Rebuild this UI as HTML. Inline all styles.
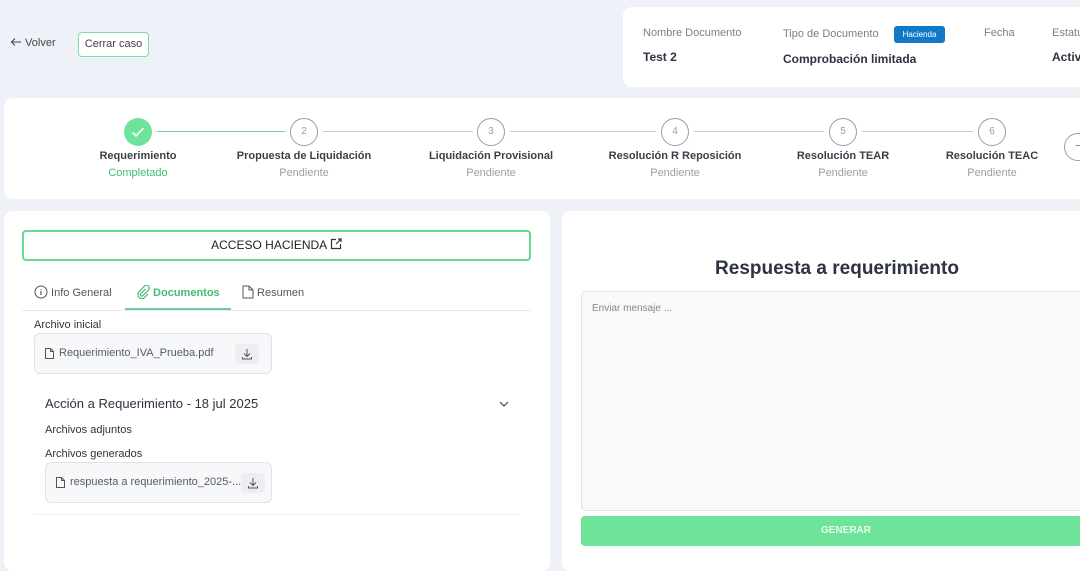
<!DOCTYPE html>
<html><head><meta charset="utf-8"><style>
*{margin:0;padding:0;box-sizing:border-box}
body{width:1080px;height:554px;overflow:hidden;background:#eef1f8;font-family:"Liberation Sans",sans-serif;position:relative;color:#2d3340}
.a{position:absolute}
.card{position:absolute;background:#fff;border-radius:9px}
.lbl{font-size:11px;color:#7a7f88}
.val{font-size:12px;font-weight:bold;color:#2d3340}
.circ{position:absolute;width:28px;height:28px;border-radius:50%;border:1.5px solid #9a9ea6;background:#fff;font-size:10px;color:#9a9ea6;text-align:center;line-height:25px}
.sl{position:absolute;font-size:11px;font-weight:bold;color:#3a3f48;white-space:nowrap;transform:translateX(-50%)}
.ss{position:absolute;font-size:11px;color:#9a9ea6;white-space:nowrap;transform:translateX(-50%)}
.line{position:absolute;height:1px;background:#c8cbd0;top:131px}
.file{position:absolute;border:1px solid #dfe2e7;border-radius:6px;background:#f7f8fa;font-size:11px;color:#555b66}
.dl{position:absolute;width:24px;height:20px;background:#eceef2;border-radius:4px}
</style></head><body>
<div class="a" style="left:10px;top:37px;font-size:11px;color:#444"><svg width="12" height="10" style="vertical-align:-1px"><path d="M11 5H1.5M5 1.5L1.5 5 5 8.5" stroke="#444" stroke-width="1.1" fill="none"/></svg> Volver</div>
<div class="a" style="left:78px;top:32px;width:71px;height:25px;border:1.5px solid #7ddfa0;border-radius:4px;background:#fff;font-size:11px;color:#444;text-align:center;line-height:22px">Cerrar caso</div>

<div class="card" style="left:623px;top:7px;width:470px;height:80px">
<div class="a lbl" style="left:20px;top:20px">Nombre Documento</div>
<div class="a val" style="left:20px;top:43px">Test 2</div>
<div class="a lbl" style="left:160px;top:21px">Tipo de Documento</div>
<div class="a" style="left:271px;top:19px;width:51px;height:17px;background:#1279c6;border-radius:3px;color:#fff;font-size:8px;text-align:center;line-height:17px">Hacienda</div>
<div class="a val" style="left:160px;top:45px">Comprobación limitada</div>
<div class="a lbl" style="left:361px;top:20px">Fecha</div>
<div class="a lbl" style="left:429px;top:20px">Estatus</div>
<div class="a val" style="left:429px;top:43px">Activo</div>
</div>

<div class="card" style="left:4px;top:98px;width:1090px;height:101px"></div>
<div class="line" style="left:157px;width:128px;background:#6fc99a"></div>
<div class="line" style="left:323px;width:150px"></div>
<div class="line" style="left:510px;width:146px"></div>
<div class="line" style="left:694px;width:130px"></div>
<div class="line" style="left:862px;width:111px"></div>
<div class="a" style="left:124px;top:118px;width:28px;height:28px;border-radius:50%;background:#6ee39a"><svg width="28" height="28"><path d="M8.5 14.5l3.5 3.5 7.5-8" stroke="#fff" stroke-width="1.6" fill="none"/></svg></div>
<div class="circ" style="left:290px;top:118px">2</div>
<div class="circ" style="left:477px;top:118px">3</div>
<div class="circ" style="left:661px;top:118px">4</div>
<div class="circ" style="left:829px;top:118px">5</div>
<div class="circ" style="left:978px;top:118px">6</div>
<div class="circ" style="left:1064px;top:133px;color:#666">&#8722;</div>
<div class="sl" style="left:138px;top:150px">Requerimiento</div><div class="ss" style="left:138px;top:167px;color:#3fbf6e">Completado</div>
<div class="sl" style="left:304px;top:150px">Propuesta de Liquidación</div><div class="ss" style="left:304px;top:167px">Pendiente</div>
<div class="sl" style="left:491px;top:150px">Liquidación Provisional</div><div class="ss" style="left:491px;top:167px">Pendiente</div>
<div class="sl" style="left:675px;top:150px">Resolución R Reposición</div><div class="ss" style="left:675px;top:167px">Pendiente</div>
<div class="sl" style="left:843px;top:150px">Resolución TEAR</div><div class="ss" style="left:843px;top:167px">Pendiente</div>
<div class="sl" style="left:992px;top:150px">Resolución TEAC</div><div class="ss" style="left:992px;top:167px">Pendiente</div>

<div class="card" style="left:4px;top:211px;width:546px;height:360px">
<div class="a" style="left:18px;top:19px;width:509px;height:31px;border:2px solid #6bd890;border-radius:4px;text-align:center;line-height:27px;font-size:12px;color:#222">ACCESO HACIENDA <svg width="12" height="12" style="vertical-align:-1px"><path d="M6 1.5H1.5v9h9V6M8 1h3v3M11 1L6 6" stroke="#333" stroke-width="1.2" fill="none"/></svg></div>
<div class="a" style="left:30px;top:74px;font-size:11px;color:#555"><svg width="14" height="14" style="vertical-align:-3px"><circle cx="7" cy="7" r="6" stroke="#555" fill="none"/><path d="M7 6v4M7 4v.8" stroke="#555" stroke-width="1.2"/></svg> Info General</div>
<div class="a" style="left:132px;top:74px;font-size:11px;color:#3fbf6e;font-weight:bold"><svg width="14" height="14" style="vertical-align:-3px"><path d="M9.5 4L4.5 9a1.5 1.5 0 002 2l6-6a2.8 2.8 0 00-4-4L2.5 7.5a4 4 0 005.5 5.5l4-4" stroke="#3fbf6e" stroke-width="1.2" fill="none"/></svg> Documentos</div>
<div class="a" style="left:238px;top:74px;font-size:11px;color:#555"><svg width="12" height="14" style="vertical-align:-3px"><path d="M1 1h6l4 4v8H1zM7 1v4h4" stroke="#555" fill="none"/></svg> Resumen</div>
<div class="a" style="left:18px;top:99px;width:509px;height:1px;background:#e6e8ec"></div>
<div class="a" style="left:121px;top:97px;width:106px;height:2px;background:#6fc99a"></div>
<div class="a" style="left:30px;top:108px;font-size:11px;color:#333">Archivo inicial</div>
<div class="file" style="left:30px;top:122px;width:238px;height:41px"><svg class="a" style="left:10px;top:14px" width="9" height="11"><path d="M.5.5h5l3 3v7H.5zM5.5.5v3h3" stroke="#555" fill="none"/></svg><span class="a" style="left:24px;top:13px">Requerimiento_IVA_Prueba.pdf</span><div class="dl" style="left:200px;top:10px"><svg width="24" height="20"><path d="M12 5v7M9 9.5l3 3 3-3M7.5 13v2h9v-2" stroke="#555" fill="none"/></svg></div></div>
<div class="a" style="left:41px;top:185px;font-size:13px;color:#2d3340">Acción a Requerimiento - 18 jul 2025</div>
<svg class="a" style="left:494px;top:188px" width="12" height="10"><path d="M2 3l4 4 4-4" stroke="#444" stroke-width="1.2" fill="none"/></svg>
<div class="a" style="left:41px;top:213px;font-size:11px;color:#333">Archivos adjuntos</div>
<div class="a" style="left:41px;top:237px;font-size:11px;color:#333">Archivos generados</div>
<div class="file" style="left:41px;top:251px;width:227px;height:41px"><svg class="a" style="left:10px;top:14px" width="9" height="11"><path d="M.5.5h5l3 3v7H.5zM5.5.5v3h3" stroke="#555" fill="none"/></svg><span class="a" style="left:24px;top:13px">respuesta a requerimiento_2025-...</span><div class="dl" style="left:195px;top:10px"><svg width="24" height="20"><path d="M12 5v7M9 9.5l3 3 3-3M7.5 13v2h9v-2" stroke="#555" fill="none"/></svg></div></div>
<div class="a" style="left:30px;top:303px;width:486px;height:1px;background:#eceef1"></div>
</div>

<div class="card" style="left:562px;top:211px;width:540px;height:360px">
<div class="a" style="left:0;width:550px;top:47px;text-align:center;font-size:19px;font-weight:bold;color:#2d3340">Respuesta a requerimiento</div>
<div class="a" style="left:19px;top:80px;width:530px;height:220px;border:1px solid #dfe2e7;border-radius:5px;background:#f8f9fb"><span class="a" style="left:10px;top:11px;font-size:10px;color:#888">Enviar mensaje ...</span></div>
<div class="a" style="left:19px;top:305px;width:530px;height:30px;border-radius:4px;background:#6ee39a;color:#e9fbef;font-size:10px;font-weight:bold;text-align:center;line-height:30px">GENERAR</div>
</div>
</body></html>
